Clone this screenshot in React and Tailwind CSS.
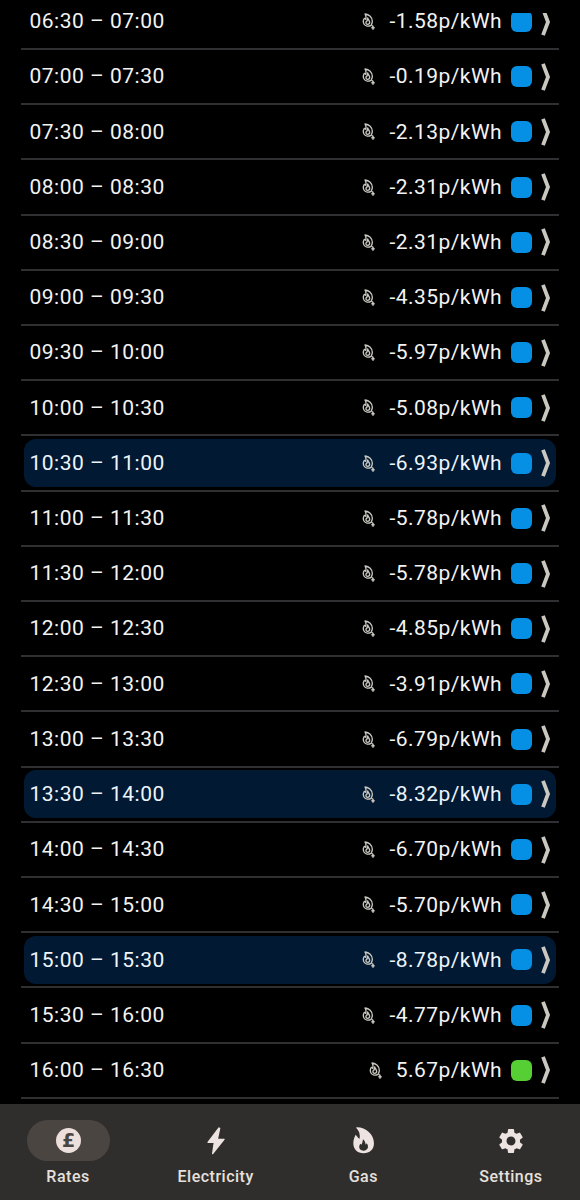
import clsx from 'clsx';
import { MdSettings } from 'react-icons/md';

const rates = [
  { time: '06:30 – 07:00', price: '-1.58' },
  { time: '07:00 – 07:30', price: '-0.19' },
  { time: '07:30 – 08:00', price: '-2.13' },
  { time: '08:00 – 08:30', price: '-2.31' },
  { time: '08:30 – 09:00', price: '-2.31' },
  { time: '09:00 – 09:30', price: '-4.35' },
  { time: '09:30 – 10:00', price: '-5.97' },
  { time: '10:00 – 10:30', price: '-5.08' },
  { time: '10:30 – 11:00', price: '-6.93', best: true },
  { time: '11:00 – 11:30', price: '-5.78' },
  { time: '11:30 – 12:00', price: '-5.78' },
  { time: '12:00 – 12:30', price: '-4.85' },
  { time: '12:30 – 13:00', price: '-3.91' },
  { time: '13:00 – 13:30', price: '-6.79' },
  { time: '13:30 – 14:00', price: '-8.32', best: true },
  { time: '14:00 – 14:30', price: '-6.70' },
  { time: '14:30 – 15:00', price: '-5.70' },
  { time: '15:00 – 15:30', price: '-8.78', best: true },
  { time: '15:30 – 16:00', price: '-4.77' },
  { time: '16:00 – 16:30', price: '5.67' },
];

function BelowGasIcon() {
  return (
    <svg viewBox="0 0 39 51" className="w-[13px] h-[17px] shrink-0" fill="none" stroke="#c9c7bf">
      <path
        d="M27 37C20 41 10 40 6 33C3 27 4 20 7 16L11 19C13 13 12 8 9 3C21 4 31 13 31 25C31 29 30 32 28 35L32 40"
        strokeWidth="4"
        strokeLinejoin="round"
      />
      <path
        d="M17 15C18 20 23 23 23 28C23 32 20 34 17 34C13 34 11 31 12 27L15 24Z"
        strokeWidth="4"
        strokeLinejoin="round"
      />
      <path d="M33 38V50M28 44.5H38" strokeWidth="4.5" />
    </svg>
  );
}

function Chevron() {
  return (
    <svg viewBox="0 0 10 28" className="w-[10px] h-[28px] shrink-0" fill="none">
      <path d="M2 0.8L7 14L2 27.2" stroke="#c9c7bf" strokeWidth="3.8" />
    </svg>
  );
}

function RateRow({ time, price, best }) {
  const negative = price.startsWith('-');
  return (
    <li className="h-[55.21px] shrink-0 px-[3px] pb-[1.6px] relative flex items-center after:absolute after:inset-x-0 after:bottom-0 after:h-[2px] after:bg-[#303033]">
      <div
        className={clsx(
          'h-12 w-full rounded-xl flex items-center pl-[5.5px] pr-[5px] text-[21px] tracking-[0.5px]',
          best ? 'bg-[#011932] text-[#edf5fc]' : 'text-[#f3f3f3]'
        )}
      >
        <span className="flex-1 pt-px">{time}</span>
        <BelowGasIcon />
        <span className="ml-[14px] pt-px tracking-[0.45px]">{price}p/kWh</span>
        <span
          className={clsx(
            'ml-[9px] mr-[9px] size-[21px] rounded-md shrink-0',
            negative ? 'bg-[#0590e5]' : 'bg-[#55cf33]'
          )}
        />
        <Chevron />
      </div>
    </li>
  );
}

function PoundIcon() {
  return (
    <span className="size-[25px] rounded-full bg-[#ede0dc] text-[#4a4541] flex items-center justify-center font-['DejaVu_Sans',sans-serif] font-bold text-[19px] leading-none tracking-normal">
      £
    </span>
  );
}

function BoltIcon() {
  return (
    <svg viewBox="0 0 54 84" className="w-[18px] h-[28px]" fill="#ede3e0" stroke="#ede3e0" strokeWidth="4" strokeLinejoin="round">
      <path d="M36 3L3 46H22L17 80L51 37H31L38 4Z" />
    </svg>
  );
}

function GasIcon() {
  return (
    <svg viewBox="0 0 64 80" className="w-[21.3px] h-[26.7px]" fill="#ede3e0">
      <path
        fillRule="evenodd"
        d="M10 1C38 0 63 22 63 49C63 68 50 79 32 79C13 79 1 67 1 49C1 39 4 31 8 23L16 33L20 35C22 21 18 11 10 3ZM30 37C29 44 28 48 26 53L22 50C15 60 20 71 32 71C45 71 49 58 41 49L38 53C37 46 35 41 30 37Z"
      />
    </svg>
  );
}

const tabs = [
  { label: 'Rates', icon: <PoundIcon />, active: true },
  { label: 'Electricity', icon: <BoltIcon /> },
  { label: 'Gas', icon: <GasIcon /> },
  { label: 'Settings', icon: <MdSettings className="size-[30px] text-[#ede3e0]" /> },
];

export default function App() {
  return (
    <div className="w-[580px] h-[1200px] bg-black font-[Roboto,sans-serif] flex flex-col pt-[13px] overflow-hidden">
      <main className="h-[1091px] shrink-0 overflow-hidden px-[21px]">
        <ul className="-mt-[18.3px] flex flex-col">
          {rates.map((rate) => (
            <RateRow key={rate.time} {...rate} />
          ))}
        </ul>
      </main>

      <nav className="flex-1 bg-[#302e2c] grid grid-cols-4 gap-[10.6px] pt-4">
        {tabs.map(({ label, icon, active }) => (
          <button key={label} className="flex flex-col items-center justify-start">
            <span
              className={clsx(
                'w-[83px] h-[41px] rounded-full flex items-center justify-center',
                active && 'bg-[#4a4541]'
              )}
            >
              {icon}
            </span>
            <span className="mt-[5px] -translate-x-[0.5px] text-base leading-[22px] font-medium tracking-[0.5px] text-[#e6e0dd]">
              {label}
            </span>
          </button>
        ))}
      </nav>
    </div>
  );
}
